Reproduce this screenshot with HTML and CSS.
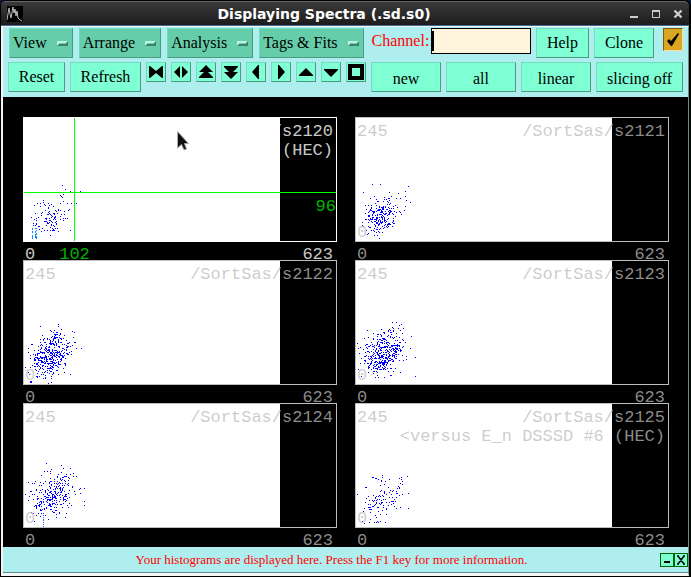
FILE: index.html
```html
<!DOCTYPE html>
<html lang="en">
<head>
    <meta charset="UTF-8">
    <meta name="viewport" content="width=device-width, initial-scale=1.0">
    <title>Displaying Spectra (.sd.s0)</title>
    <link rel="stylesheet" href="styles.css">
</head>
<body>
    <div class="window">
        <header class="titlebar">
            <svg class="app-icon" viewBox="0 0 16 16" width="16" height="16">
                <rect width="16" height="16" fill="#000"/>
                <path d="M0 14L2 2L3 8L4 12L6 1L7 7L8 3L9 10L10 5L11 12L13 14L15 15" fill="none" stroke="#bbb"/>
            </svg>
            <h1>Displaying Spectra (.sd.s0)</h1>
            <div class="window-buttons">
                <button type="button" aria-label="Minimize">
                    <svg viewBox="0 0 10 10" width="10" height="10"><path d="M1 7h8v2h-8z" fill="#ccc"/></svg>
                </button>
                <button type="button" aria-label="Maximize">
                    <svg viewBox="0 0 10 10" width="10" height="10"><path d="M1 1h8v8h-8zM2 3v5h6v-5z" fill="#ccc" fill-rule="evenodd"/></svg>
                </button>
                <button type="button" aria-label="Close">
                    <svg viewBox="0 0 10 10" width="10" height="10"><path d="M1.500 1.500l7 7M8.500 1.500l-7 7" stroke="#ccc" stroke-width="2.4"/></svg>
                </button>
            </div>
        </header>

        <div class="client">
            <div class="toolbar">
                <div class="row row-menus">
                    <button type="button" class="btn menu">View <span class="bar"></span></button>
                    <button type="button" class="btn menu">Arrange <span class="bar"></span></button>
                    <button type="button" class="btn menu">Analysis <span class="bar"></span></button>
                    <button type="button" class="btn menu">Tags &amp; Fits <span class="bar"></span></button>
                    <div class="channel">
                        <label for="channel">Channel:</label>
                        <input type="text" id="channel">
                        <span class="caret"></span>
                    </div>
                    <button type="button" class="btn help">Help</button>
                    <button type="button" class="btn clone">Clone</button>
                    <button type="button" class="check" aria-label="Apply">
                        <svg viewBox="0 0 12 14" width="12" height="14"><path d="M0 8L2 6L4 8L11 0L12 1L5 13L4 13Z" fill="#000"/></svg>
                    </button>
                </div>
                <div class="row row-actions">
                    <button type="button" class="btn reset">Reset</button>
                    <button type="button" class="btn refresh">Refresh</button>
                    <button type="button" class="btn icon" aria-label="Compress">
                        <svg viewBox="0 0 16 16" width="16" height="16"><path d="M1 2H2L8 7L14 2H15V14H14L8 9L2 14H1Z"/></svg>
                    </button>
                    <button type="button" class="btn icon" aria-label="Expand">
                        <svg viewBox="0 0 16 16" width="16" height="16"><path d="M7 2V14L1 8ZM9 2V14L15 8Z"/></svg>
                    </button>
                    <button type="button" class="btn icon" aria-label="Page up">
                        <svg viewBox="0 0 16 16" width="16" height="16"><path d="M8 1L15 8H10L15 13V14H1V13L6 8H1Z"/></svg>
                    </button>
                    <button type="button" class="btn icon" aria-label="Page down">
                        <svg viewBox="0 0 16 16" width="16" height="16"><path d="M8 15L15 8H10L15 3V2H1V3L6 8H1Z"/></svg>
                    </button>
                    <button type="button" class="btn icon" aria-label="Left">
                        <svg viewBox="0 0 16 16" width="16" height="16"><path d="M11 1V15H10L4 8L10 1Z"/></svg>
                    </button>
                    <button type="button" class="btn icon" aria-label="Right">
                        <svg viewBox="0 0 16 16" width="16" height="16"><path d="M5 1V15H6L12 8L6 1Z"/></svg>
                    </button>
                    <button type="button" class="btn icon" aria-label="Up">
                        <svg viewBox="0 0 16 16" width="16" height="16"><path d="M1 12H15V11L8 4L1 11Z"/></svg>
                    </button>
                    <button type="button" class="btn icon" aria-label="Down">
                        <svg viewBox="0 0 16 16" width="16" height="16"><path d="M1 5H15V6L8 13L1 6Z"/></svg>
                    </button>
                    <button type="button" class="btn icon" aria-label="Full view">
                        <svg viewBox="0 0 16 16" width="16" height="16"><path d="M0 0H16V16H0ZM4 4V12H12V4Z" fill-rule="evenodd"/></svg>
                    </button>
                    <button type="button" class="btn mode">new</button>
                    <button type="button" class="btn mode">all</button>
                    <button type="button" class="btn mode">linear</button>
                    <button type="button" class="btn mode wide">slicing off</button>
                </div>
            </div>

            <main class="plots">
                <section class="cell active">
                    <div class="plot">
                        <svg class="data" id="s2120" viewBox="0 0 314 125"></svg>
                        <p class="title">/s2120<br>(HEC)</p>
                        <span class="marker">96</span>
                        <svg class="pointer" viewBox="0 0 12 20" width="12" height="20">
                            <path d="M.5 .5V17L4.5 13.500L7 19L9.500 18L7.500 12.500H11.500Z" fill="#111" stroke="#aaa"/>
                        </svg>
                    </div>
                    <div class="axis"><span>0</span><span class="cursor-x">102</span><span class="max">623</span></div>
                </section>
                <section class="cell">
                    <div class="plot">
                        <svg class="data" id="s2121" viewBox="0 0 314 125"></svg>
                        <span class="top">245</span>
                        <p class="title">/SortSas/s2121</p>
                        <span class="bottom">0</span>
                    </div>
                    <div class="axis"><span>0</span><span class="max">623</span></div>
                </section>
                <section class="cell">
                    <div class="plot">
                        <svg class="data" id="s2122" viewBox="0 0 314 125"></svg>
                        <span class="top">245</span>
                        <p class="title">/SortSas/s2122</p>
                        <span class="bottom">0</span>
                    </div>
                    <div class="axis"><span>0</span><span class="max">623</span></div>
                </section>
                <section class="cell">
                    <div class="plot">
                        <svg class="data" id="s2123" viewBox="0 0 314 125"></svg>
                        <span class="top">245</span>
                        <p class="title">/SortSas/s2123</p>
                        <span class="bottom">0</span>
                    </div>
                    <div class="axis"><span>0</span><span class="max">623</span></div>
                </section>
                <section class="cell">
                    <div class="plot">
                        <svg class="data" id="s2124" viewBox="0 0 314 125"></svg>
                        <span class="top">245</span>
                        <p class="title">/SortSas/s2124</p>
                        <span class="bottom">0</span>
                    </div>
                    <div class="axis"><span>0</span><span class="max">623</span></div>
                </section>
                <section class="cell">
                    <div class="plot">
                        <svg class="data" id="s2125" viewBox="0 0 314 125"></svg>
                        <span class="top">245</span>
                        <p class="title">/SortSas/s2125<br>&lt;versus E_n DSSSD #6 (HEC)</p>
                        <span class="bottom">0</span>
                    </div>
                    <div class="axis"><span>0</span><span class="max">623</span></div>
                </section>
            </main>

            <footer class="status">
                <p>Your histograms are displayed here. Press the F1 key for more information.</p>
                <div class="status-buttons">
                    <button type="button" aria-label="Iconify">
                        <svg viewBox="0 0 10 10" width="10" height="10"><path d="M2 6h6v2h-6z"/></svg>
                    </button>
                    <button type="button" aria-label="Dismiss">
                        <svg viewBox="0 0 10 10" width="10" height="10"><path d="M2 1L8 9M8 1L2 9M1 1h2M7 1h2M1 9h2M7 9h2" stroke="#000" stroke-width="1.500"/></svg>
                    </button>
                </div>
            </footer>
        </div>
    </div>

    <script src="plots.js"></script>
</body>
</html>
```
FILE: styles.css
```css
* {
    box-sizing: border-box;
}
body {
    margin: 0;
    background: #0a1a30;
    font-family: "Liberation Serif", "Times New Roman", serif;
    font-size: 16px;
    color: #000;
}
button {
    font: inherit;
    padding: 0;
    margin: 0;
}
h1, p {
    margin: 0;
}
svg {
    display: block;
}
.window {
    display: flex;
    flex-direction: column;
    min-height: 100vh;
    background: #000;
    border-radius: 6px 6px 0 0;
    padding: 1px 2px 1px 1px;
}

/* title bar */
.titlebar {
    display: flex;
    align-items: center;
    height: 25px;
    padding: 0 6px;
    border-radius: 5px 5px 0 0;
    border-top: 1px solid #666;
    border-bottom: 1px solid #47688f;
    background: linear-gradient(#3a3a3a, #2b2b2b 50%, #1c1c1c);
}
.titlebar h1 {
    flex: 1;
    color: #fff;
    text-align: center;
    font: bold 14px/20px "DejaVu Sans", sans-serif;
    padding-right: 4px;
}
.window-buttons {
    display: flex;
    gap: 12px;
}
.window-buttons button {
    border: 0;
    background: none;
}
.client {
    flex: 1;
    display: flex;
    flex-direction: column;
    border: solid #f4f4f4;
    border-width: 1px 1px 3px 2px;
    border-right-color: #5f8f8f;
    background: #afeeee;
}

/* toolbar */
.toolbar {
    padding: 1px 5px 5px;
}
.row {
    display: flex;
    align-items: flex-start;
    gap: 5px;
}
.row-menus {
    height: 34px;
    padding-left: 1px;
}
.btn {
    flex: none;
    height: 30px;
    border: 1px solid;
    border-color: #72dcc0 #4a9a80 #4a9a80 #72dcc0;
    background: #7fffd4;
    text-align: center;
}
.menu {
    display: flex;
    align-items: center;
    gap: 10px;
    margin-right: 1px;
    padding: 0 4px 0 3px;
    background: #66cdaa;
}
.bar {
    width: 11px;
    height: 5px;
    border: 2px solid;
    border-color: #b8f4e0 #3f8068 #3f8068 #b8f4e0;
}
.channel {
    position: relative;
    display: flex;
    flex: 1;
    gap: 2px;
    min-width: 0;
    padding-left: 2px;
    color: #f00;
    line-height: 26px;
}
.channel input {
    flex: 1;
    min-width: 0;
    height: 26px;
    border: 1px solid #000;
    border-radius: 0;
    background: #fff5dc;
}
.caret {
    position: absolute;
    left: 62px;
    top: 3px;
    width: 2px;
    height: 20px;
    background: #000;
}
.help {
    width: 53px;
}
.clone {
    width: 60px;
}
.check {
    display: flex;
    align-items: center;
    justify-content: center;
    flex: none;
    width: 20px;
    height: 23px;
    margin-left: 4px;
    border: 1px solid;
    border-color: #7a5c12 #ffe0a0 #ffe0a0 #7a5c12;
    background: #daa520;
}
.reset {
    width: 57px;
}
.refresh {
    width: 71px;
}
.icon {
    display: flex;
    align-items: center;
    justify-content: center;
    width: 20px;
    height: 20px;
}
.mode {
    flex: 1 0 70px;
    padding-top: 4px;
}
.wide {
    flex-basis: 87px;
}

/* plots */
.plots {
    flex: 1;
    display: grid;
    grid-template-columns: 1fr 1fr;
    align-content: start;
    column-gap: 18px;
    padding: 20px 19px 0 20px;
    background: #000;
    font: 17px/19px "Liberation Mono", "Courier New", monospace;
    color: rgba(188, 188, 188, 0.75);
}
.plot {
    position: relative;
}
.data {
    width: 100%;
    height: auto;
    shape-rendering: crispEdges;
}
.top, .bottom, .title, .marker, .pointer {
    position: absolute;
}
.top {
    left: 2px;
    top: 5px;
}
.bottom {
    left: 2px;
    bottom: 0;
}
.title {
    right: 4px;
    top: 5px;
    text-align: right;
    white-space: nowrap;
}
.marker {
    right: 1px;
    top: 80px;
    color: #00b400;
}
.pointer {
    left: 154px;
    top: 14px;
}
.axis {
    display: flex;
    height: 18px;
    padding: 4px 4px 0 2px;
    line-height: 18px;
}
.axis .max {
    margin-left: auto;
}
.axis .cursor-x {
    margin-left: 24px;
    color: #00b400;
}
.active {
    color: rgba(255, 255, 255, 0.8);
}

/* status line */
.status {
    display: flex;
    align-items: center;
    height: 26px;
    border-bottom: 1px solid #5f8f8f;
    color: #f00;
    font-size: 13px;
}
.status p {
    flex: 1;
    text-align: center;
}
.status-buttons {
    display: flex;
}
.status-buttons button {
    display: flex;
    align-items: center;
    justify-content: center;
    width: 14px;
    height: 14px;
    border: 1px solid #006400;
    background: #7fffd4;
}
```
FILE: plots.js
```js
// cx, cy: cluster centre, sx, sy: spread, n: number of hits, extra: single hits
const spectra = {
    s2120: {
        cx: 27, cy: 99, sx: 9, sy: 8, n: 115, active: true,
        extra: [[42, 72], [57, 74], [37, 78], [20, 83], [20, 85], [53, 86], [46, 92], [47, 113], [30, 113], [8, 100]]
    },
    s2121: {
        cx: 26, cy: 98, sx: 8, sy: 9, n: 250,
        extra: [[17, 67], [25, 67], [8, 75], [53, 69], [50, 74], [34, 75], [50, 79], [51, 83], [55, 85], [8, 109]]
    },
    s2122: {
        cx: 27, cy: 95, sx: 10, sy: 11, n: 440,
        extra: [[17, 66], [35, 66], [28, 71], [49, 71], [51, 72], [52, 82], [58, 88], [47, 114], [25, 123], [7, 121], [8, 121], [7, 122], [8, 122]]
    },
    s2123: {
        cx: 28, cy: 93, sx: 10, sy: 11, n: 440,
        extra: [[41, 62], [44, 65], [48, 68], [12, 70], [56, 76], [55, 88], [60, 97], [60, 116], [35, 115], [20, 117], [23, 117]]
    },
    s2124: {
        cx: 29, cy: 92, sx: 11, sy: 11, n: 300,
        extra: [[50, 70], [50, 73], [47, 71], [18, 72], [5, 79], [57, 85], [61, 85], [61, 98], [61, 102], [2, 91], [42, 114]]
    },
    s2125: {
        cx: 28, cy: 96, sx: 10, sy: 10, n: 120,
        extra: [[17, 74], [18, 74], [20, 75], [21, 75], [23, 76], [27, 74], [46, 74], [46, 76], [2, 91], [10, 84], [53, 90], [53, 105], [25, 118], [14, 119]]
    }
};

let seed = 7;
function random() {
    seed = (seed * 16807) % 2147483647;
    return seed / 2147483647;
}

function gauss() {
    let sum = 0;
    for (let i = 0; i < 6; i++) sum += random();
    return (sum - 3) * 1.41;
}

function dots(points, color) {
    return `<path fill="${color}" d="${points.map(p => `M${p[0]} ${p[1]}h1v1h-1z`).join('')}"/>`;
}

for (const id in spectra) {
    const s = spectra[id];
    const points = s.extra.slice();
    for (let i = 0; i < s.n; i++) {
        const u = gauss();
        const x = Math.round(s.cx + u * s.sx);
        const y = Math.round(s.cy - u * s.sy * 0.3 + gauss() * s.sy * 0.95);
        if (x > 1 && y < 123) points.push([x, y]);
    }
    const frame = s.active ? '#fff' : '#bebebe';
    let svg = `<rect width="314" height="125" fill="${frame}"/>
        <rect x="1" y="1" width="312" height="123" fill="#000"/>
        <rect x="1" y="1" width="256" height="123" fill="#fff"/>`;
    svg += dots(points, '#0000ff');
    if (s.active) {
        const low = [];
        for (let y = 111; y < 122; y++) low.push([9, y], [12, y], [13, y]);
        svg += dots(low.filter(() => random() < 0.7), '#1e6fff');
        svg += dots([[12, 115], [13, 116], [12, 118], [13, 119], [9, 118], [9, 120]], '#00bfff');
        svg += '<path d="M51 1h1v123h-1zM1 75h312v1h-312z" fill="#00ff00"/>';
    }
    if (id === 's2124') {
        svg += dots([[20, 114], [20, 116], [20, 117], [20, 119], [20, 121], [20, 123], [20, 110], [20, 112]], '#1e6fff');
    }
    document.getElementById(id).innerHTML = svg;
}
```
